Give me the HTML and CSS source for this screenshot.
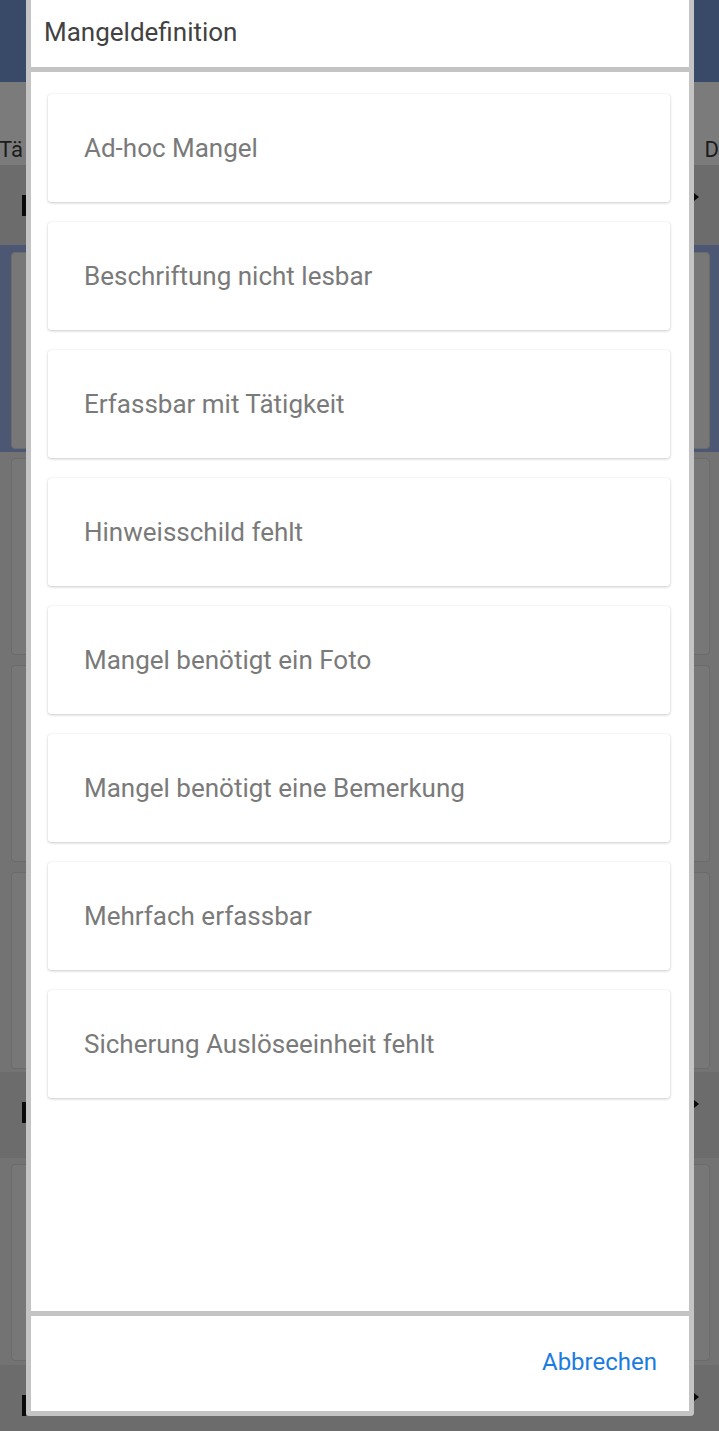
FILE: index.html
```html
<!DOCTYPE html>
<html lang="de">
<head>
<meta charset="utf-8">
<title>Mangeldefinition</title>
<link rel="stylesheet" href="styles.css">
</head>
<body>
<div class="app">
  <div class="topbar"></div>
  <div class="tabs">
    <span class="tab-left">Tä</span>
    <span class="tab-right">D</span>
  </div>
  <div class="group-head"><span class="marker"></span><span class="arrow"></span></div>
  <div class="selected-wrap"><div class="bg-card"></div></div>
  <div class="bg-list">
    <div class="bg-card"></div>
    <div class="bg-card"></div>
    <div class="bg-card"></div>
  </div>
  <div class="group-head short"><span class="marker"></span><span class="arrow"></span></div>
  <div class="bg-list single">
    <div class="bg-card"></div>
  </div>
  <div class="group-head last"><span class="marker"></span><span class="arrow"></span></div>
</div>

<div class="dialog">
  <div class="dlg-head">Mangeldefinition</div>
  <div class="dlg-body">
    <div class="opt">Ad-hoc Mangel</div>
    <div class="opt">Beschriftung nicht lesbar</div>
    <div class="opt">Erfassbar mit Tätigkeit</div>
    <div class="opt">Hinweisschild fehlt</div>
    <div class="opt">Mangel benötigt ein Foto</div>
    <div class="opt">Mangel benötigt eine Bemerkung</div>
    <div class="opt">Mehrfach erfassbar</div>
    <div class="opt">Sicherung Auslöseeinheit fehlt</div>
  </div>
  <div class="dlg-foot"><span class="btn">Abbrechen</span></div>
</div>
</body>
</html>
```
FILE: styles.css
```css
html, body {
  margin: 0;
  padding: 0;
}
body {
  width: 719px;
  height: 1431px;
  overflow: hidden;
  position: relative;
  background: #5e5e5e;
  font-family: Roboto, "Liberation Sans", sans-serif;
}
.app {
  display: flex;
  flex-direction: column;
  width: 719px;
  height: 1431px;
  background: #737373;
}
.topbar {
  height: 82px;
  background: #394a68;
  flex: none;
}
.tabs {
  height: 83px;
  flex: none;
  background: #7b7b7b;
  display: flex;
  justify-content: space-between;
  align-items: flex-end;
  box-sizing: border-box;
  font-size: 22px;
  color: #1c1c1c;
  line-height: 30px;
}
.tab-left {
  display: block;
  width: 26px;
  overflow: hidden;
  white-space: nowrap;
  margin-left: -1px;
}
.tab-right { margin-right: 0; }
.group-head {
  height: 80px;
  flex: none;
  background: #6c6c6c;
  position: relative;
}
.group-head.short { height: 86px; margin-top: 3px; }
.group-head.last { flex: 1; margin-top: 4px; }
.marker {
  position: absolute;
  left: 22px;
  top: 30px;
  width: 4px;
  height: 21px;
  background: #0a0a0a;
}
.arrow {
  position: absolute;
  right: 20px;
  top: 28px;
  width: 0;
  height: 0;
  border-left: 5px solid #0a0a0a;
  border-top: 4px solid transparent;
  border-bottom: 4px solid transparent;
}
.selected-wrap {
  flex: none;
  background: #4b5773;
  padding: 7px 9px 5px 11px;
  height: 207px;
  box-sizing: border-box;
  display: flex;
}
.selected-wrap .bg-card { flex: 1; }
.bg-list {
  flex: none;
  display: flex;
  flex-direction: column;
  gap: 10px;
  padding: 6px 9px 0 11px;
}
.bg-list.single { padding-top: 6px; }
.bg-card {
  height: 197px;
  box-sizing: border-box;
  background: #777777;
  border: 1px solid #6b6b6b;
  border-radius: 4px;
}

.dialog {
  position: absolute;
  left: 26px;
  top: 0;
  width: 668px;
  height: 1416px;
  box-sizing: border-box;
  border: 5px solid #c4c4c4;
  border-top: none;
  border-radius: 0 0 4px 4px;
  background: #ffffff;
  display: flex;
  flex-direction: column;
}
.dlg-head {
  height: 67px;
  flex: none;
  display: flex;
  align-items: center;
  padding-left: 13px;
  padding-bottom: 3px;
  box-sizing: border-box;
  font-size: 26px;
  color: #424242;
}
.dlg-body {
  flex: 1;
  border-top: 5px solid #c4c4c4;
  padding: 22px 19px 0 17px;
  display: flex;
  flex-direction: column;
  gap: 20px;
}
.opt {
  height: 108px;
  flex: none;
  box-sizing: border-box;
  display: flex;
  align-items: center;
  padding-left: 36px;
  background: #ffffff;
  border-radius: 3px;
  box-shadow: 0 1px 3px rgba(0, 0, 0, 0.2), 0 0 1px rgba(0, 0, 0, 0.12);
  font-size: 26px;
  color: #7a7a7a;
}
.dlg-foot {
  height: 100px;
  flex: none;
  border-top: 5px solid #c4c4c4;
  display: flex;
  justify-content: flex-end;
  align-items: center;
  padding-right: 32px;
  padding-bottom: 3px;
  box-sizing: border-box;
}
.btn {
  font-size: 24px;
  color: #1a7be0;
}
```
